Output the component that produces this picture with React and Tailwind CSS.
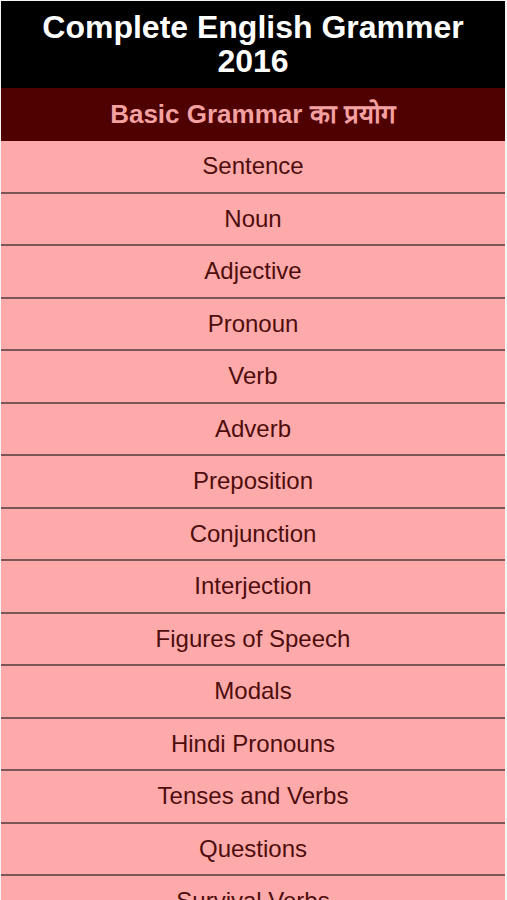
import React from 'react';

const topics = [
    'Sentence',
    'Noun',
    'Adjective',
    'Pronoun',
    'Verb',
    'Adverb',
    'Preposition',
    'Conjunction',
    'Interjection',
    'Figures of Speech',
    'Modals',
    'Hindi Pronouns',
    'Tenses and Verbs',
    'Questions',
    'Survival Verbs',
];

export default function App() {
    return (
        <div className="w-[507px] h-[900px] overflow-hidden bg-[#f4f4f4] pt-px pl-px pr-[2px] font-['Liberation_Sans',Arial,sans-serif]">
            <div className="bg-black h-[87px] flex items-center justify-center text-white font-bold text-[32px] leading-[34px] text-center pb-px">
                <h1>
                    Complete English Grammer
                    <br />
                    2016
                </h1>
            </div>

            <div className="bg-[#4f0000] h-[53px] flex items-center justify-center text-[#f4a1a1] font-bold text-[26px]">
                Basic Grammar का प्रयोग
            </div>

            <ul className="bg-[#ffaaaa]">
                {topics.map((topic) => (
                    <li
                        key={topic}
                        className="h-[52.5px] flex items-center justify-center border-b-2 border-[#7a5656] text-[#4e0d0d] text-[24px]"
                    >
                        {topic}
                    </li>
                ))}
            </ul>
        </div>
    );
}
